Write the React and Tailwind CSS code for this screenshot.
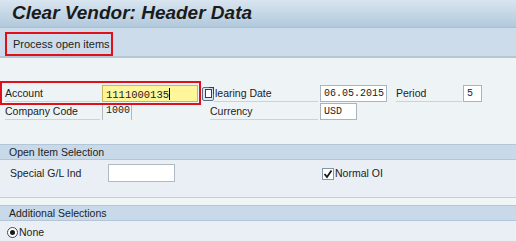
import React from "react";

const Label = ({ children, className = "" }) => (
  <div className={`border-b border-[#c9d3dc] text-[10.5px] leading-[15px] text-[#222] ${className}`}>{children}</div>
);

const Field = ({ value, className = "" }) => (
  <div
    className={`h-[17px] border border-[#a9b4bf] bg-white px-[3px] font-['Liberation_Mono',monospace] text-[10px] leading-[15px] text-[#222] ${className}`}
  >
    {value}
  </div>
);

const SectionHeader = ({ title }) => (
  <div className="h-[16px] border-y border-[#b3c6d8] bg-[#c8d9ea] pl-[9px] text-[10.5px] leading-[14px] text-[#222]">
    {title}
  </div>
);

export default function App() {
  return (
    <div className="h-[241px] w-[516px] overflow-hidden bg-[#eef4f6] font-['Liberation_Sans',Arial,sans-serif]">
      <div className="h-[28px] border-b border-[#a9c0d4] bg-gradient-to-b from-[#d9e5f0] to-[#b1c9dc] pl-[12px] pt-[2px]">
        <span className="text-[19px] font-bold italic leading-[22px] text-[#1b1b1b]">Clear Vendor: Header Data</span>
      </div>
      <div className="h-[30px] border-b-2 border-[#b7c6d3] bg-[#cddcea] pl-[5px] pt-[3px]">
        <div className="inline-block h-[24px] w-[108px] border-2 border-[#e0101a] pl-[6px] text-[11px] leading-[20px] text-[#222]">
          Process open items
        </div>
      </div>

      <div className="h-[86px] pt-[27px]">
        <div className="relative flex h-[17px] items-center">
          <div className="absolute left-0 top-[-4px] h-[24px] w-[201px] border-2 border-[#e0101a]" />
          <Label className="ml-[5px] w-[95px]">Account</Label>
          <div className="ml-[2px] h-[17px] w-[96px] border border-[#c9b85a] bg-[#fff59a] px-[3px] font-['Liberation_Mono',monospace] text-[10.5px] leading-[15px] text-[#222]">
            1111000135<span className="inline-block h-[12px] w-px translate-y-[2px] bg-black" />
          </div>
          <div className="relative z-10 ml-[4px] flex h-[14px] w-[12px] items-center justify-center rounded-[2px] border border-[#5a6f86] bg-[#dfe6ee]">
            <div className="relative h-[9px] w-[7px] border border-[#2f3f52] bg-white">
              <div className="absolute -right-[3px] -top-[3px] h-[7px] w-[5px] border-r border-t border-[#2f3f52]" />
            </div>
          </div>
          <Label className="w-[104px] pl-[1px]">learing Date</Label>
          <Field value="06.05.2015" className="ml-[2px] w-[67px]" />
          <Label className="ml-[9px] w-[66px]">Period</Label>
          <Field value="5" className="ml-[1px] w-[19px]" />
        </div>
        <div className="mt-[1px] flex h-[17px] items-center">
          <Label className="ml-[5px] w-[95px]">Company Code</Label>
          <div className="ml-[2px] h-[17px] w-[30px] border-x border-[#b0bac4] px-[3px] font-['Liberation_Mono',monospace] text-[10px] leading-[15px] text-[#222]">
            1000
          </div>
          <Label className="ml-[78px] w-[108px]">Currency</Label>
          <Field value="USD" className="ml-[2px] w-[37px]" />
        </div>
      </div>

      <SectionHeader title="Open Item Selection" />
      <div className="flex h-[37px] items-start bg-[#e9eff5] pt-[4px]">
        <div className="ml-[10px] w-[98px] pt-[2px] text-[10.5px] leading-[15px] text-[#222]">Special G/L Ind</div>
        <div className="h-[18px] w-[67px] border border-[#b0bac4] bg-white" />
        <div className="ml-[147px] flex items-center pt-[2px]">
          <div className="flex h-[12px] w-[12px] items-center justify-center border border-[#8796a6] bg-white">
            <svg width="10" height="10" viewBox="0 0 10 10">
              <path d="M1.5 5 L4 8 L8.5 1.5" fill="none" stroke="#1a1a1a" strokeWidth="1.8" />
            </svg>
          </div>
          <span className="ml-[1px] text-[10.5px] leading-[15px] text-[#222]">Normal OI</span>
        </div>
      </div>
      <div className="h-[8px] border-t border-[#c3cfd9] bg-[#f0f5f8]" />
      <SectionHeader title="Additional Selections" />
      <div className="flex h-[30px] items-start bg-[#e9eff5] pl-[7px] pt-[4px]">
        <div className="mt-[2px] flex h-[11px] w-[11px] items-center justify-center rounded-full border border-[#3c4a58] bg-white">
          <div className="h-[5px] w-[5px] rounded-full bg-[#1a1a1a]" />
        </div>
        <span className="ml-[1px] text-[10.5px] leading-[15px] text-[#222]">None</span>
      </div>
    </div>
  );
}
